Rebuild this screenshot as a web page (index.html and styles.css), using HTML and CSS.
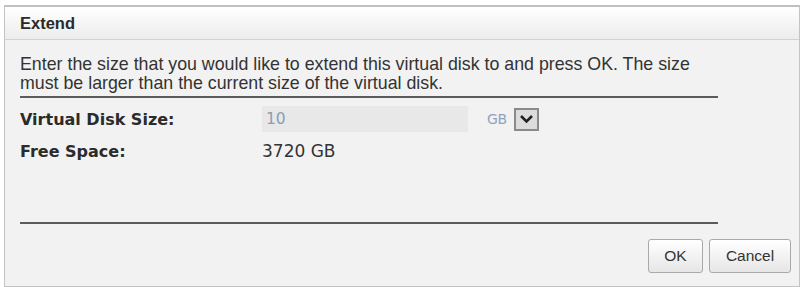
FILE: index.html
```html
<!DOCTYPE html>
<html>
<head>
<meta charset="utf-8">
<title>Extend</title>
<link rel="stylesheet" href="styles.css">
</head>
<body>
<div class="dialog">
  <div class="header">Extend</div>
  <div class="body">
    <div class="content">
      <p class="intro">Enter the size that you would like to extend this virtual disk to and press OK. The size must be larger than the current size of the virtual disk.</p>
      <div class="rule"></div>
      <div class="row">
        <div class="label">Virtual Disk Size:</div>
        <div class="input">10</div>
        <div class="unit">
          <span class="unit-text">GB</span>
          <span class="drop"><svg width="15" height="10" viewBox="0 0 15 10"><path d="M2 2 L7.5 7.5 L13 2" fill="none" stroke="#222" stroke-width="2.6"/></svg></span>
        </div>
      </div>
      <div class="row">
        <div class="label">Free Space:</div>
        <div class="value">3720 GB</div>
      </div>
      <div class="rule rule-bottom"></div>
    </div>
    <div class="buttons">
      <button class="btn btn-ok">OK</button>
      <button class="btn btn-cancel">Cancel</button>
    </div>
  </div>
</div>
</body>
</html>
```
FILE: styles.css
```css
html, body {
  margin: 0;
  padding: 0;
  background: #ffffff;
}
.dialog {
  margin: 5px 0 0 4px;
  width: 794px;
  height: 279px;
  border: 1px solid #c4c4c4;
  border-top: 2px solid #c0c0c0;
  background: #f2f2f2;
  display: flex;
  flex-direction: column;
}
.header {
  height: 32px;
  line-height: 32px;
  padding-left: 15px;
  border-bottom: 1px solid #d2d2d2;
  background: linear-gradient(#ffffff, #ececec);
  font-family: "Liberation Sans", Arial, sans-serif;
  font-weight: bold;
  font-size: 16.5px;
  color: #2a2a2a;
}
.body {
  flex: 1;
  padding: 0 8px 0 15px;
  display: flex;
  flex-direction: column;
}
.content {
  width: 698px;
}
.intro {
  margin: 15px 0 0 0;
  font-family: "Liberation Sans", Arial, sans-serif;
  font-size: 17.8px;
  line-height: 19px;
  color: #333;
}
.rule {
  height: 2px;
  background: #5c5c5c;
  margin-top: 3px;
}
.row {
  display: flex;
  align-items: center;
  height: 26px;
}
.rule + .row {
  margin-top: 8px;
}
.row + .row {
  margin-top: 6px;
}
.label {
  width: 242px;
  font-family: "DejaVu Sans", Verdana, sans-serif;
  font-weight: bold;
  font-size: 16px;
  color: #2b2b2b;
}
.input {
  width: 202px;
  height: 26px;
  line-height: 26px;
  padding-left: 4px;
  background: #e8e8e8;
  font-family: "DejaVu Sans", Verdana, sans-serif;
  font-size: 15.5px;
  color: #8d9db3;
}
.unit {
  display: flex;
  align-items: center;
  margin-left: 19px;
}
.unit-text {
  font-family: "DejaVu Sans", Verdana, sans-serif;
  font-size: 14px;
  color: #8fa2bd;
  letter-spacing: -0.3px;
}
.drop {
  margin-left: 7px;
  width: 21px;
  height: 19px;
  border: 2px solid #8a8a8a;
  background: #dcdcdc;
  display: flex;
  align-items: center;
  justify-content: center;
}
.value {
  font-family: "DejaVu Sans", Verdana, sans-serif;
  font-size: 17px;
  color: #333;
}
.rule-bottom {
  margin-top: 58px;
}
.buttons {
  display: flex;
  justify-content: flex-end;
  gap: 6px;
  margin-top: 15px;
}
.btn {
  height: 34px;
  border: 1px solid #a9a9a9;
  border-radius: 3px;
  background: linear-gradient(#ffffff, #e6e6e6);
  font-family: "Liberation Sans", Arial, sans-serif;
  font-size: 15.5px;
  color: #333;
  padding: 0;
}
.btn-ok {
  width: 55px;
}
.btn-cancel {
  width: 82px;
}
```
